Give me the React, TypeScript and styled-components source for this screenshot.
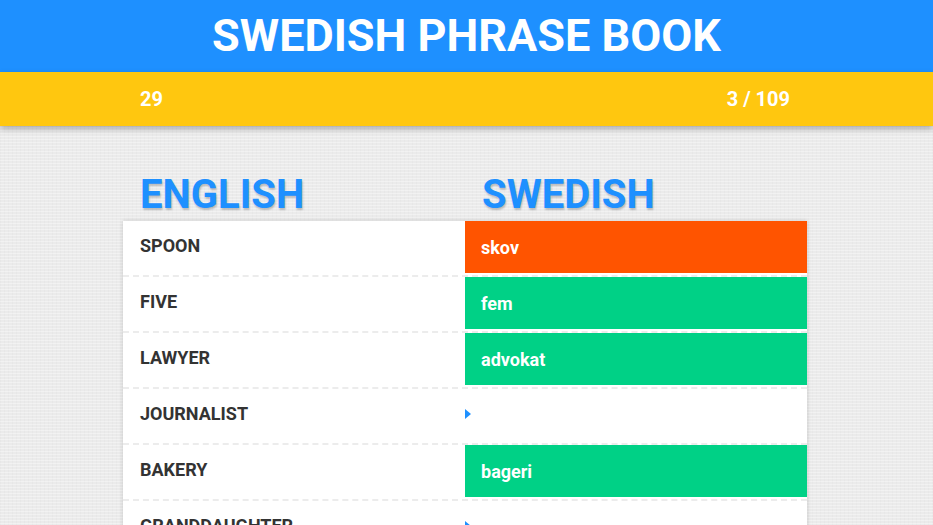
import React from "react";
import styled, { createGlobalStyle } from "styled-components";

const Global = createGlobalStyle`
  html, body { margin: 0; padding: 0; }
  body {
    font-family: Roboto, "Liberation Sans", Arial, sans-serif;
    background-color: #ebebeb;
    background-image:
      repeating-linear-gradient(0deg, rgba(255,255,255,0.35) 0px, rgba(255,255,255,0.35) 1px, transparent 1px, transparent 3px),
      repeating-linear-gradient(90deg, rgba(0,0,0,0.015) 0px, rgba(0,0,0,0.015) 1px, transparent 1px, transparent 4px);
    overflow: hidden;
  }
`;

const Header = styled.header`
  height: 72px;
  background: #1e90ff;
  display: flex;
  align-items: center;
  justify-content: center;
`;

const Title = styled.h1`
  margin: 0 0 2px;
  color: #fff;
  font-size: 45px;
  font-weight: 700;
  line-height: 1;
  text-transform: uppercase;
`;

const StatusBar = styled.div`
  height: 54px;
  background: #ffc70f;
  box-shadow: 0 3px 6px rgba(0, 0, 0, 0.28);
  position: relative;
`;

const Container = styled.div`
  width: 684px;
  margin-left: calc(50% - 343.5px);
  box-sizing: border-box;
`;

const StatusInner = styled(Container)`
  height: 100%;
  padding: 0 17px;
  display: flex;
  align-items: center;
  justify-content: space-between;
  color: #fff;
  font-size: 20px;
  font-weight: 700;
`;

const Headings = styled(Container)`
  margin-top: 49px;
  display: grid;
  grid-template-columns: 1fr 1fr;
`;

const Heading = styled.h2`
  margin: 0;
  padding-left: 17px;
  height: 46px;
  font-size: 40px;
  line-height: 40px;
  font-weight: 700;
  color: #1e90ff;
  text-transform: uppercase;
  text-shadow: 1px 2px 2px rgba(0, 0, 0, 0.22);
`;

const Table = styled(Container)`
  background: #fff;
  box-shadow: 0 0 4px rgba(0, 0, 0, 0.18);
`;

const Row = styled.div`
  display: grid;
  grid-template-columns: 342px 342px;
  height: 56px;
  box-sizing: border-box;
  border-bottom: 2px dashed #ececec;
`;

const EnglishCell = styled.div`
  padding: 0 17px;
  height: 48px;
  display: flex;
  align-items: center;
  color: #333;
  font-size: 18px;
  font-weight: 700;
  text-transform: uppercase;
`;

const SwedishCell = styled.div<{ $state: "wrong" | "right" | "empty" }>`
  position: relative;
  height: 52px;
  padding: 0 16px;
  display: flex;
  align-items: center;
  color: #fff;
  font-size: 18px;
  font-weight: 700;
  background: ${(p) =>
    p.$state === "wrong" ? "#ff5400" : p.$state === "right" ? "#00d186" : "#fff"};
`;

const Caret = styled.span`
  position: absolute;
  left: 0;
  top: 20px;
  width: 0;
  height: 0;
  border-left: 6px solid #1e90ff;
  border-top: 5px solid transparent;
  border-bottom: 5px solid transparent;
`;

type Item = { en: string; sv: string; state: "wrong" | "right" | "empty" };

const items: Item[] = [
  { en: "Spoon", sv: "skov", state: "wrong" },
  { en: "Five", sv: "fem", state: "right" },
  { en: "Lawyer", sv: "advokat", state: "right" },
  { en: "Journalist", sv: "", state: "empty" },
  { en: "Bakery", sv: "bageri", state: "right" },
  { en: "Granddaughter", sv: "", state: "empty" },
];

export default function App() {
  return (
    <>
      <Global />
      <Header>
        <Title>Swedish Phrase Book</Title>
      </Header>
      <StatusBar>
        <StatusInner>
          <span>29</span>
          <span>3 / 109</span>
        </StatusInner>
      </StatusBar>
      <Headings>
        <Heading>English</Heading>
        <Heading>Swedish</Heading>
      </Headings>
      <Table>
        {items.map((it) => (
          <Row key={it.en}>
            <EnglishCell>{it.en}</EnglishCell>
            <SwedishCell $state={it.state}>
              {it.state === "empty" ? <Caret /> : it.sv}
            </SwedishCell>
          </Row>
        ))}
      </Table>
    </>
  );
}
